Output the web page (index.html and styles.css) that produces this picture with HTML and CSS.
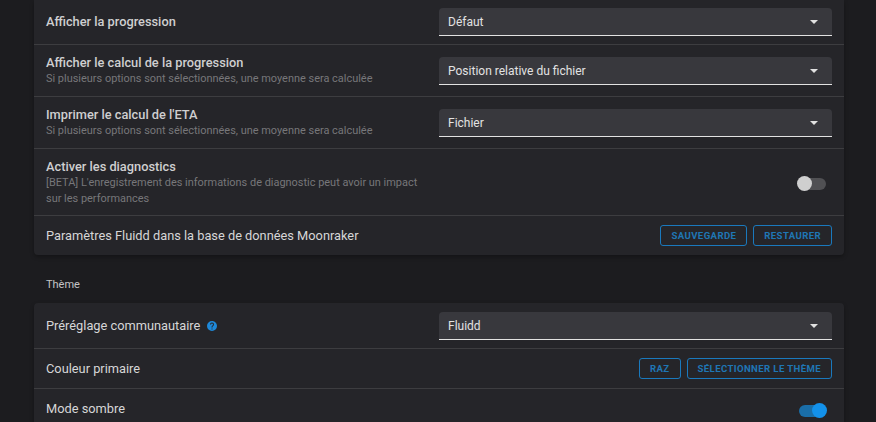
FILE: index.html
```html
<!DOCTYPE html>
<html lang="fr">

<head>
    <meta charset="UTF-8">
    <title>Fluidd</title>
    <link rel="stylesheet" href="styles.css">
</head>

<body>
    <div class="card first">
        <div class="row row-first">
            <div class="label"><div class="title flush">Afficher la progression</div></div>
            <div class="select"><span>Défaut</span><i class="arrow"></i></div>
        </div>
        <div class="row row-sub">
            <div class="label">
                <div class="title">Afficher le calcul de la progression</div>
                <div class="sub">Si plusieurs options sont sélectionnées, une moyenne sera calculée</div>
            </div>
            <div class="select"><span>Position relative du fichier</span><i class="arrow"></i></div>
        </div>
        <div class="row row-sub">
            <div class="label">
                <div class="title">Imprimer le calcul de l'ETA</div>
                <div class="sub">Si plusieurs options sont sélectionnées, une moyenne sera calculée</div>
            </div>
            <div class="select"><span>Fichier</span><i class="arrow"></i></div>
        </div>
        <div class="row row-diag">
            <div class="label">
                <div class="title">Activer les diagnostics</div>
                <div class="sub">[BETA] L'enregistrement des informations de diagnostic peut avoir un impact sur les performances</div>
            </div>
            <div class="switch"><div class="track"></div><div class="thumb"></div></div>
        </div>
        <div class="row row-btn">
            <div class="label"><div class="title light">Paramètres Fluidd dans la base de données Moonraker</div></div>
            <div class="actions">
                <div class="btn">Sauvegarde</div>
                <div class="btn">Restaurer</div>
            </div>
        </div>
    </div>

    <div class="heading">Thème</div>

    <div class="card">
        <div class="row row-preset">
            <div class="label">
                <div class="title light">Préréglage communautaire
                    <svg class="help" viewBox="0 0 24 24" width="12" height="12">
                        <path fill="#1e88d8" d="M15.07 11.25l-.9.92C13.45 12.89 13 13.5 13 15h-2v-.5c0-1.11.45-2.11 1.17-2.83l1.24-1.26c.37-.36.59-.86.59-1.41a2 2 0 0 0-2-2 2 2 0 0 0-2 2H8a4 4 0 0 1 4-4 4 4 0 0 1 4 4c0 .88-.36 1.67-.93 2.25M13 19h-2v-2h2M12 2A10 10 0 0 0 2 12a10 10 0 0 0 10 10 10 10 0 0 0 10-10c0-5.53-4.5-10-10-10z"/>
                    </svg>
                </div>
            </div>
            <div class="select"><span>Fluidd</span><i class="arrow"></i></div>
        </div>
        <div class="row row-color">
            <div class="label"><div class="title light">Couleur primaire</div></div>
            <div class="actions">
                <div class="btn">RAZ</div>
                <div class="btn">Sélectionner le thème</div>
            </div>
        </div>
        <div class="row row-dark">
            <div class="label"><div class="title light flush">Mode sombre</div></div>
            <div class="switch on"><div class="track"></div><div class="thumb"></div></div>
        </div>
    </div>
</body>

</html>
```

FILE: styles.css
```css
html,
body {
    height: 422px;
    overflow: hidden;
}

body {
    margin: 0;
    padding: 0 32px 0 34px;
    background: #1c1c1f;
    font-family: Roboto, sans-serif;
    color: #d6d6d7;
}

.card {
    background: #252529;
    border-radius: 0 0 4px 4px;
    box-shadow: 0 2px 4px rgba(0, 0, 0, 0.3);
}

.card:not(.first) {
    border-radius: 4px 4px 0 0;
}

.row {
    display: flex;
    align-items: center;
    justify-content: space-between;
    padding: 0 12px;
    border-bottom: 1px solid #3d3d40;
}

.row:last-child {
    border-bottom: none;
}

.row-first {
    height: 44px;
}

.row-sub {
    height: 51px;
}

.row-diag {
    height: 66px;
}

.row-btn {
    height: 39px;
}

.row-preset {
    height: 45px;
}

.row-color {
    height: 39px;
}

.row-dark {
    height: 40px;
}

.label {
    width: 381px;
}

.title {
    padding-top: 1px;
    font-size: 12.8px;
    font-weight: 500;
    line-height: 16px;
    color: #cfcfd0;
}

.title.light {
    font-weight: 400;
    color: #d6d6d7;
}

.title.flush {
    padding-top: 0;
}

.sub {
    font-size: 10.95px;
    line-height: 16px;
    color: #77777a;
}

.help {
    margin-left: 2px;
    vertical-align: -2px;
}

.select {
    box-sizing: border-box;
    display: flex;
    align-items: center;
    justify-content: space-between;
    width: 393px;
    height: 28px;
    padding: 1px 14px 0 9px;
    background: #38383d;
    border-bottom: 1px solid #e2e2e2;
    border-radius: 4px 4px 0 0;
    font-size: 12px;
    color: #e2e2e2;
}

.arrow {
    width: 0;
    height: 0;
    border-left: 4px solid transparent;
    border-right: 4px solid transparent;
    border-top: 4px solid #e2e2e2;
}

.actions {
    display: flex;
    gap: 6px;
}

.btn {
    box-sizing: border-box;
    height: 21px;
    padding: 0 10px;
    line-height: 19px;
    border: 1px solid #1a79bd;
    border-radius: 3px;
    font-size: 9.6px;
    font-weight: 700;
    letter-spacing: 0.38px;
    text-transform: uppercase;
    color: #1f76b4;
}

.switch {
    position: relative;
    width: 30px;
    height: 16px;
    margin: 3px 5px 0 0;
}

.track {
    position: absolute;
    left: 2px;
    top: 2px;
    width: 27px;
    height: 12px;
    border-radius: 6px;
    background: #505053;
}

.thumb {
    position: absolute;
    left: 0;
    top: 0;
    width: 15px;
    height: 15px;
    border-radius: 50%;
    background: #cfcfcf;
}

.switch.on .track {
    background: #1a6ea8;
}

.switch.on .thumb {
    left: 15px;
    background: #1391ea;
}

.heading {
    height: 48px;
    line-height: 60px;
    padding-left: 12px;
    font-size: 11px;
    color: #c4c4c5;
}
```
